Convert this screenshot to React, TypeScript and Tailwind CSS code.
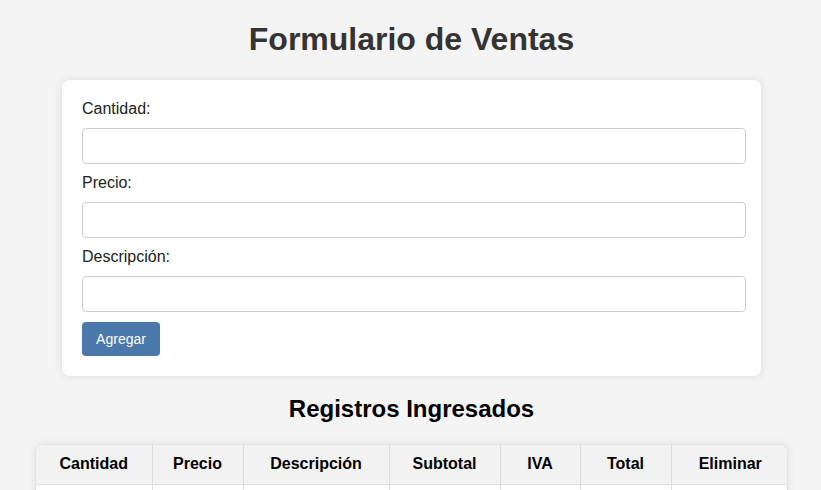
const COLUMNS = [
  { label: "Cantidad", width: "w-[116px]" },
  { label: "Precio", width: "w-[91px]" },
  { label: "Descripción", width: "w-[146px]" },
  { label: "Subtotal", width: "w-[111px]" },
  { label: "IVA", width: "w-[80px]" },
  { label: "Total", width: "w-[91px]" },
  { label: "Eliminar", width: "w-[118px]" },
];

const FIELDS = ["Cantidad:", "Precio:", "Descripción:"];

export default function App() {
  return (
    <main className="min-h-screen bg-[#f4f4f4] font-['Liberation_Sans',Arial,sans-serif] pt-[21px] pl-[2px]">
      {/* Title */}
      <h1 className="text-center text-[32px] leading-[37px] font-bold text-[#333] mb-[22px]">
        Formulario de Ventas
      </h1>

      {/* Form card */}
      <section className="w-[699px] mx-auto bg-white rounded-lg p-5 shadow-[0_0_10px_rgba(0,0,0,0.1)]">
        {FIELDS.map((f) => (
          <div key={f}>
            <label className="block text-[16px] leading-[18px] text-[#222] mb-[10px]">{f}</label>
            <input
              type="text"
              className="block w-[664px] h-[36px] border border-[#ccc] rounded-[4px] mb-[10px] px-2 outline-none"
            />
          </div>
        ))}
        <button className="h-[34px] w-[78px] rounded-[4px] bg-[#4a78ab] text-white text-[14px]">
          Agregar
        </button>
      </section>

      {/* Records */}
      <h2 className="text-center text-[24px] leading-[28px] font-bold text-black mt-[19px] mb-[21px]">
        Registros Ingresados
      </h2>

      <div className="w-[753px] mx-auto rounded-lg overflow-hidden border border-[#e2e2e2] shadow-[0_0_10px_rgba(0,0,0,0.08)] bg-white">
        <table className="w-full border-collapse table-fixed">
          <thead>
            <tr className="bg-[#f2f2f2]">
              {COLUMNS.map((c, i) => (
                <th
                  key={c.label}
                  className={`${c.width} h-[39px] text-[16px] font-bold text-black text-center border-b border-[#ddd] ${i > 0 ? "border-l" : ""}`}
                >
                  {c.label}
                </th>
              ))}
            </tr>
          </thead>
          <tbody>
            <tr>
              {COLUMNS.map((c, i) => (
                <td key={c.label} className={`h-[40px] border-[#ddd] ${i > 0 ? "border-l" : ""}`} />
              ))}
            </tr>
          </tbody>
        </table>
      </div>
    </main>
  );
}
